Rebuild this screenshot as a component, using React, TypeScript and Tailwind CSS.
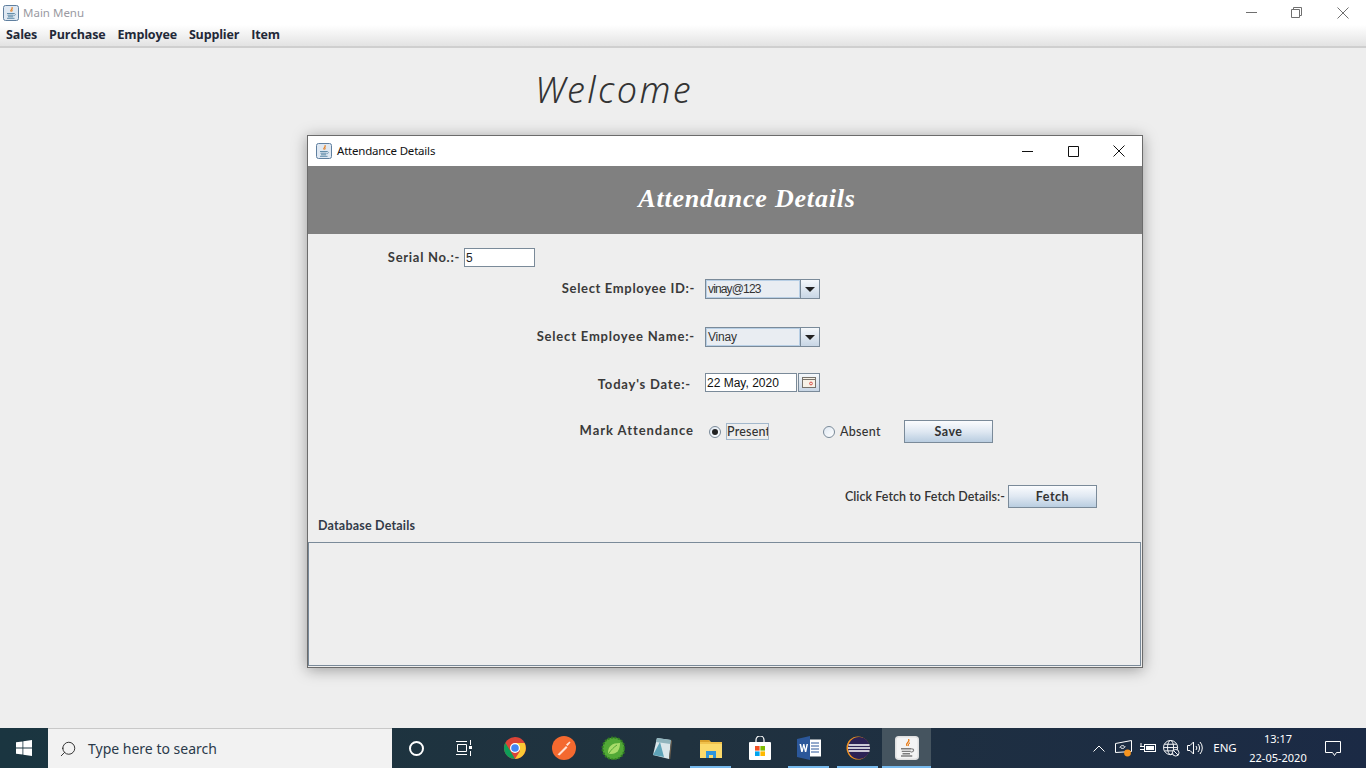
import React from 'react';
import { Search } from 'lucide-react';

const JavaIcon: React.FC<{ size?: number; tile?: boolean }> = ({ size = 16, tile = false }) => (
  <svg width={size} height={size} viewBox="0 0 16 16" className="shrink-0">
    <rect x="0.5" y="0.5" width="15" height="15" rx="2" fill={tile ? '#f4f4f4' : '#dfe8f2'} stroke={tile ? '#e0e0e0' : '#5f7f9f'} />
    <path d="M9 2c1 1.5-2 2.5-1.2 4.5C7 5 10.5 4 9 2z M10 4.5c-.8.8-1.5 1-1.2 2.2-.2-1.3.4-1.6 1.2-2.2z" fill="#e76f00" stroke="#e76f00" strokeWidth="0.5" />
    <path d="M4 8.5h7M4.5 10.2h6M5 11.8h5M4 13.3h7.5" stroke={tile ? '#7d7d7d' : '#5382a1'} strokeWidth="0.9" />
    <path d="M11 8.5c2 0 2 2-.5 2.4" stroke={tile ? '#7d7d7d' : '#5382a1'} strokeWidth="0.7" fill="none" />
  </svg>
);

const MenuItem: React.FC<{ label: string }> = ({ label }) => (
  <span className="text-[12.5px] font-bold text-[#222838] [font-family:'Open_Sans',sans-serif] tracking-[-0.15px]">{label}</span>
);

const FormRow: React.FC<{ label: string; height: string; labelClass: string; children: React.ReactNode }> = ({ label, height, labelClass, children }) => (
  <div className={`flex items-center gap-[10px] ${height}`}>
    <div className={`w-[387px] shrink-0 text-right text-[13px] font-bold text-[#3a3a3a] [font-family:Lato,sans-serif] ${labelClass}`}>{label}</div>
    {children}
  </div>
);

const ComboBox: React.FC<{ value: string; textClass: string }> = ({ value, textClass }) => (
  <div className="flex h-[20px] w-[115px] border border-[#7a8a99]">
    <div className={`flex flex-1 items-center border border-[#b8cfe5] bg-[#e9edf2] pl-[1px] text-[12px] text-[#333333] [font-family:'Liberation_Sans',sans-serif] ${textClass}`}>{value}</div>
    <div className="flex w-[19px] items-center justify-center border-l border-[#7a8a99] bg-gradient-to-b from-[#f5f8fb] to-[#c8d6e5]">
      <div className="h-0 w-0 border-x-[5px] border-t-[5px] border-x-transparent border-t-[#222222]" />
    </div>
  </div>
);

const JavaButton: React.FC<{ label: string }> = ({ label }) => (
  <div className="flex h-[23px] w-[89px] items-center justify-center border border-[#7a8a99] bg-gradient-to-b from-[#fbfcfe] via-[#dfe8f2] to-[#b9cde0] pt-[1px] text-[12.5px] font-bold text-[#333333] [font-family:Lato,sans-serif] tracking-[0.5px]">
    {label}
  </div>
);

const Radio: React.FC<{ checked?: boolean }> = ({ checked = false }) => (
  <div className="flex h-[12px] w-[12px] items-center justify-center rounded-full border border-[#7a8a99] bg-gradient-to-br from-[#dfe8f2] to-[#ffffff]">
    {checked && <div className="h-[6px] w-[6px] rounded-full bg-[#222222]" />}
  </div>
);

const TaskSlot: React.FC<{ children: React.ReactNode; open?: boolean; active?: boolean }> = ({ children, open = false, active = false }) => (
  <div className={`relative flex h-full w-[49px] items-center justify-center ${active ? 'bg-[#45545f]' : ''}`}>
    {children}
    {open && <div className={`absolute bottom-0 h-[2px] bg-[#76b9ed] ${active ? 'inset-x-0' : 'inset-x-[4px]'}`} />}
  </div>
);

const TraySlot: React.FC<{ children: React.ReactNode }> = ({ children }) => (
  <div className="flex w-[24px] justify-center">{children}</div>
);

export default function App() {
  return (
    <div className="relative flex h-[768px] w-[1366px] flex-col overflow-hidden bg-[#eeeeee]">
      {/* main frame title */}
      <div className="flex h-[25px] shrink-0 items-center bg-white pl-[3px]">
        <JavaIcon />
        <span className="ml-[4px] text-[11.5px] text-[#9a9aa2] [font-family:'Noto_Sans',sans-serif]">Main Menu</span>
        <div className="ml-auto flex items-center text-[#6f6f6f]">
          <div className="flex w-[45px] justify-center">
            <svg width="11" height="11" viewBox="0 0 11 11" stroke="currentColor"><path d="M0 5.5h11" /></svg>
          </div>
          <div className="flex w-[45px] justify-center">
            <svg width="11" height="11" viewBox="0 0 11 11" fill="none" stroke="currentColor"><path d="M.5 2.5h8v8h-8zM2.5 2.5v-2h8v8h-2" /></svg>
          </div>
          <div className="flex w-[47px] justify-center">
            <svg width="12" height="12" viewBox="0 0 12 12" stroke="currentColor"><path d="M.5.5l11 11M11.5.5l-11 11" /></svg>
          </div>
        </div>
      </div>
      <div className="flex h-[23px] shrink-0 items-center gap-[12px] border-b-2 border-[#cfcfcf] bg-gradient-to-b from-[#ffffff] to-[#e3e3e3] pl-[6px]">
        <MenuItem label="Sales" />
        <MenuItem label="Purchase" />
        <MenuItem label="Employee" />
        <MenuItem label="Supplier" />
        <MenuItem label="Item" />
      </div>

      <div className="h-[680px] shrink-0 pl-[535px] pt-[20px]">
        <span className="text-[36px] font-light italic leading-[44px] tracking-[2.4px] text-[#333333] [font-family:'Noto_Sans',cursive]">Welcome</span>
      </div>

      {/* attendance window */}
      <div className="absolute left-[307px] top-[135px] flex h-[533px] w-[836px] flex-col border border-[#6b6b6b] bg-[#eeeeee] shadow-[0_2px_14px_rgba(0,0,0,0.35)]">
        <div className="flex h-[30px] shrink-0 items-center bg-white pl-[8px]">
          <JavaIcon />
          <span className="ml-[5px] text-[11.5px] tracking-[-0.2px] text-[#111111] [font-family:'Noto_Sans',sans-serif]">Attendance Details</span>
          <div className="ml-auto flex items-center text-[#111111]">
            <div className="flex w-[46px] justify-center">
              <svg width="11" height="11" viewBox="0 0 11 11" stroke="currentColor"><path d="M0 5.5h11" /></svg>
            </div>
            <div className="flex w-[46px] justify-center">
              <svg width="11" height="11" viewBox="0 0 11 11" fill="none" stroke="currentColor"><path d="M.5.5h10v10H.5z" /></svg>
            </div>
            <div className="flex w-[46px] justify-center">
              <svg width="12" height="12" viewBox="0 0 12 12" stroke="currentColor"><path d="M.5.5l11 11M11.5.5l-11 11" /></svg>
            </div>
          </div>
        </div>
        <div className="flex h-[68px] shrink-0 items-center justify-center bg-[#808080] pb-[3px] pl-[44px] text-[26px] font-bold italic tracking-[0.8px] text-white [font-family:'Liberation_Serif',serif]">
          Attendance Details
        </div>

        <div className="flex flex-1 flex-col">
          <div className="mt-[14px] flex h-[19px] items-center">
            <div className="w-[152px] shrink-0 text-right text-[13px] font-bold tracking-[0.7px] text-[#3a3a3a] [font-family:Lato,sans-serif]">Serial No.:-</div>
            <div className="ml-[4px] flex h-[19px] w-[71px] items-center border border-[#7a8a99] bg-white pl-[1px] text-[12px] text-[#222222] [font-family:'Liberation_Sans',sans-serif]">5</div>
          </div>

          <div className="mt-[12px]"><FormRow label="Select Employee ID:-" height="h-[20px]" labelClass="tracking-[0.65px]"><ComboBox value="vinay@123" textClass="tracking-[-0.85px]" /></FormRow></div>
          <div className="mt-[28px]"><FormRow label="Select Employee Name:-" height="h-[20px]" labelClass="tracking-[0.8px]"><ComboBox value="Vinay" textClass="tracking-[-0.2px]" /></FormRow></div>
          <div className="mt-[26px]">
            <FormRow label="Today's Date:-" height="h-[19px]" labelClass="pr-[4px] pt-[4px] tracking-[0.8px]">
              <div className="flex">
                <div className="flex h-[19px] w-[92px] items-center border border-[#7a8a99] bg-white pl-[1px] text-[12px] text-[#111111] [font-family:'Liberation_Sans',sans-serif]">22 May, 2020</div>
                <div className="ml-[1px] flex h-[19px] w-[22px] items-center justify-center border border-[#7a8a99] bg-gradient-to-b from-[#f5f8fb] to-[#c8d6e5]">
                  <svg width="14" height="11" viewBox="0 0 14 11"><rect x="0.5" y="0.5" width="13" height="10" fill="#f7f1e6" stroke="#77726a" /><path d="M1 2.5h12" stroke="#77726a" /><circle cx="9" cy="6.5" r="1.4" fill="none" stroke="#d8504a" /></svg>
                </div>
              </div>
            </FormRow>
          </div>

          <div className="mt-[28px] flex h-[23px] items-center">
            <div className="w-[386px] shrink-0 pb-[2px] text-right text-[13px] font-bold tracking-[0.95px] text-[#3a3a3a] [font-family:Lato,sans-serif]">Mark Attendance</div>
            <div className="ml-[15px]"><Radio checked /></div>
            <div className="ml-[5px] flex h-[17px] w-[43px] items-center overflow-hidden whitespace-nowrap border border-[#a3b8cc] pt-[1px] text-[12.5px] font-medium tracking-[0.2px] text-[#333333] [font-family:Lato,sans-serif]">Present</div>
            <div className="ml-[54px]"><Radio /></div>
            <div className="ml-[5px] w-[64px] pt-[1px] text-[12.5px] font-medium tracking-[0.3px] text-[#333333] [font-family:Lato,sans-serif]">Absent</div>
            <JavaButton label="Save" />
          </div>

          <div className="mt-[42px] flex h-[23px] items-center justify-end pr-[45px]">
            <span className="mr-[3px] pt-[2px] text-[12.5px] font-semibold tracking-[0.05px] text-[#333333] [font-family:Lato,sans-serif]">Click Fetch to Fetch Details:-</span>
            <JavaButton label="Fetch" />
          </div>

          <div className="mt-[10px] pl-[10px] text-[12.5px] font-bold leading-[16px] tracking-[0.2px] text-[#333a48] [font-family:Lato,sans-serif]">Database Details</div>

          <div className="mr-[1px] mt-[8px] h-[124px] border border-[#7a8a99] bg-[#eeeeee]" />
        </div>
      </div>

      {/* taskbar */}
      <div className="flex h-[40px] shrink-0 items-center bg-gradient-to-r from-[#1a3540] via-[#20323f] to-[#1b2a45]">
        <div className="flex h-full w-[48px] items-center justify-center">
          <svg width="16" height="16" viewBox="0 0 16 16" fill="#ffffff"><path d="M0 2.3 6.5 1.4v6.2H0zM7.3 1.3 16 0v7.6H7.3zM0 8.4h6.5v6.2L0 13.7zM7.3 8.4H16V16l-8.7-1.3z" /></svg>
        </div>
        <div className="flex h-full w-[344px] items-center border-t border-[#c8c8c8] bg-[#f2f2f2] pl-[11px]">
          <Search size={18} strokeWidth={1.2} className="-scale-x-100 text-[#222222]" />
          <span className="ml-[11px] text-[14px] text-[#2b3a4a] [font-family:'Noto_Sans',sans-serif]">Type here to search</span>
        </div>
        <div className="flex h-full w-[48px] items-center justify-center">
          <div className="h-[15px] w-[15px] rounded-full border-2 border-white" />
        </div>
        <div className="flex h-full w-[48px] items-center justify-center pr-[1px]">
          <svg width="16" height="16" viewBox="0 0 16 16" fill="none" stroke="#ffffff"><path d="M0 1.5h11M0 14.5h11M1.5 4.5h9v7h-9zM14.5 0v5M14.5 11v5" /><rect x="13" y="6" width="3" height="3" fill="#ffffff" stroke="none" /></svg>
        </div>
        <div className="ml-[2px] flex h-full items-center">
          <TaskSlot>
            <svg width="22" height="22" viewBox="0 0 22 22"><circle cx="11" cy="11" r="11" fill="#db4437" /><path d="M11 22A11 11 0 0 1 1.3 5.8L7 15z" fill="#0f9d58" /><path d="M11 6h9.6A11 11 0 0 1 11 22l5-8z" fill="#fcc934" /><circle cx="11" cy="11" r="5" fill="#ffffff" /><circle cx="11" cy="11" r="3.8" fill="#4285f4" /></svg>
          </TaskSlot>
          <TaskSlot>
            <svg width="24" height="24" viewBox="0 0 24 24"><circle cx="12" cy="12" r="12" fill="#f4692f" /><path d="M5.5 18.5 14 10l1.5 1.5-8 8zM14 8.5l3.5-3 1 1-3 3.5z" fill="#ffe2d4" /></svg>
          </TaskSlot>
          <TaskSlot>
            <svg width="24" height="24" viewBox="0 0 24 24"><circle cx="12.5" cy="12.5" r="11" fill="#52a936" /><circle cx="12.5" cy="12.5" r="11" fill="none" stroke="#2f7a22" strokeWidth="2" strokeDasharray="2 1.5" /><path d="M7 17c0-7 4-10 12-10 0 7-3 11-9 11-1 0-2-.4-3-1z" fill="#a9dc6a" /><path d="M8 17c2-3 5-6 8-8" stroke="#52a936" strokeWidth="1" fill="none" /></svg>
          </TaskSlot>
          <TaskSlot>
            <svg width="24" height="24" viewBox="0 0 24 24"><path d="M7 2 21 4l-2 19L3 19z" fill="#d9e6ea" /><path d="M7 2 21 4l-.5 4L6 6z" fill="#8fb4bd" /><path d="M3 19 10 6l4 15z" fill="#5ea3b8" /><path d="M19 23l2-19 1 1-1.8 18z" fill="#6a5d4d" /></svg>
          </TaskSlot>
          <TaskSlot open>
            <svg width="22" height="20" viewBox="0 0 22 20"><path d="M0 2h9l2 2h11v16H0z" fill="#f0c14c" /><path d="M0 2h9l1 2H0z" fill="#d9a02b" /><path d="M0 6h22v14H0z" fill="#fbd96a" /><path d="M6 20v-7h10v7h-3v-3H9v3z" fill="#2f95dc" /></svg>
          </TaskSlot>
          <TaskSlot>
            <svg width="22" height="24" viewBox="0 0 22 24"><path d="M7 7V4a4 4 0 0 1 8 0v3" fill="none" stroke="#ffffff" strokeWidth="1.2" /><rect x="0" y="6" width="22" height="18" rx="1" fill="#ffffff" /><rect x="6" y="10" width="4.6" height="4.6" fill="#f25022" /><rect x="11.4" y="10" width="4.6" height="4.6" fill="#7fba00" /><rect x="6" y="15.4" width="4.6" height="4.6" fill="#00a4ef" /><rect x="11.4" y="15.4" width="4.6" height="4.6" fill="#ffb900" /></svg>
          </TaskSlot>
          <TaskSlot open>
            <svg width="24" height="24" viewBox="0 0 24 24"><rect x="8" y="3.5" width="16" height="17" fill="#ffffff" /><path d="M14 7h8M14 10h8M14 13h8M14 16h8" stroke="#2b579a" /><path d="M0 3 13 0v24L0 21z" fill="#2b579a" /><path d="M2.5 8h1.6l1 5 1.1-5h1.2l1.1 5 1-5H11l-1.7 8H7.9L6.8 11l-1.1 5H4.2z" fill="#ffffff" /></svg>
          </TaskSlot>
          <TaskSlot open>
            <svg width="24" height="24" viewBox="0 0 24 24"><circle cx="12" cy="12" r="11.5" fill="#f7941e" /><circle cx="13" cy="12" r="11" fill="#2c2255" /><path d="M2.5 9h21M2 12h22M2.5 15h21" stroke="#ffffff" strokeWidth="1.4" /></svg>
          </TaskSlot>
          <TaskSlot open active><JavaIcon size={24} tile /></TaskSlot>
        </div>

        <div className="ml-[156px] flex h-full items-center text-white">
          <TraySlot>
            <svg width="12" height="7" viewBox="0 0 12 7" fill="none" stroke="#ffffff"><path d="M.5 6.5 6 1l5.5 5.5" /></svg>
          </TraySlot>
          <TraySlot>
            <svg width="17" height="17" viewBox="0 0 17 17" fill="none" stroke="#ffffff"><path d="M.5 3.5 16.5.5v11l-16 1z" /><path d="M5 8c0-2 2-3 4-2M10 6c0 2-2 3-4 2" /><circle cx="12.5" cy="13" r="3.4" fill="#f7941e" stroke="none" /></svg>
          </TraySlot>
          <TraySlot>
            <svg width="17" height="12" viewBox="0 0 17 12" fill="none" stroke="#ffffff"><rect x="5.5" y="2.5" width="11" height="7" /><rect x="7" y="4" width="8" height="4" fill="#ffffff" stroke="none" /><path d="M1 4.5h4M1 7.5h4M2 1v3" /></svg>
          </TraySlot>
          <TraySlot>
            <svg width="17" height="17" viewBox="0 0 18 18" fill="none" stroke="#ffffff"><circle cx="8" cy="8" r="7.5" /><ellipse cx="8" cy="8" rx="3.2" ry="7.5" /><path d="M.5 8h15M1.5 4.5h13M1.5 11.5h13" /><circle cx="13.5" cy="13.5" r="3.5" fill="#1b2a45" /><path d="M11 11l5 5" /></svg>
          </TraySlot>
          <TraySlot>
            <svg width="16" height="14" viewBox="0 0 16 14" fill="none" stroke="#ffffff"><path d="M.5 4.5h2.5L6.5 1v12L3 9.5H.5z" /><path d="M9 5a3 3 0 0 1 0 4M11 3a6 6 0 0 1 0 8M13 1a9 9 0 0 1 0 12" /></svg>
          </TraySlot>
          <div className="w-[36px] text-center text-[11.5px] [font-family:'Noto_Sans',sans-serif]">ENG</div>
          <div className="flex w-[70px] flex-col items-center text-[11px] leading-[19px] [font-family:'Noto_Sans',sans-serif]">
            <span>13:17</span>
            <span>22-05-2020</span>
          </div>
          <div className="flex w-[40px] justify-center">
            <svg width="16" height="15" viewBox="0 0 16 15" fill="none" stroke="#ffffff"><path d="M.5.5h15v11h-4l-2 3-2-3h-7z" /></svg>
          </div>
        </div>
      </div>
    </div>
  );
}
